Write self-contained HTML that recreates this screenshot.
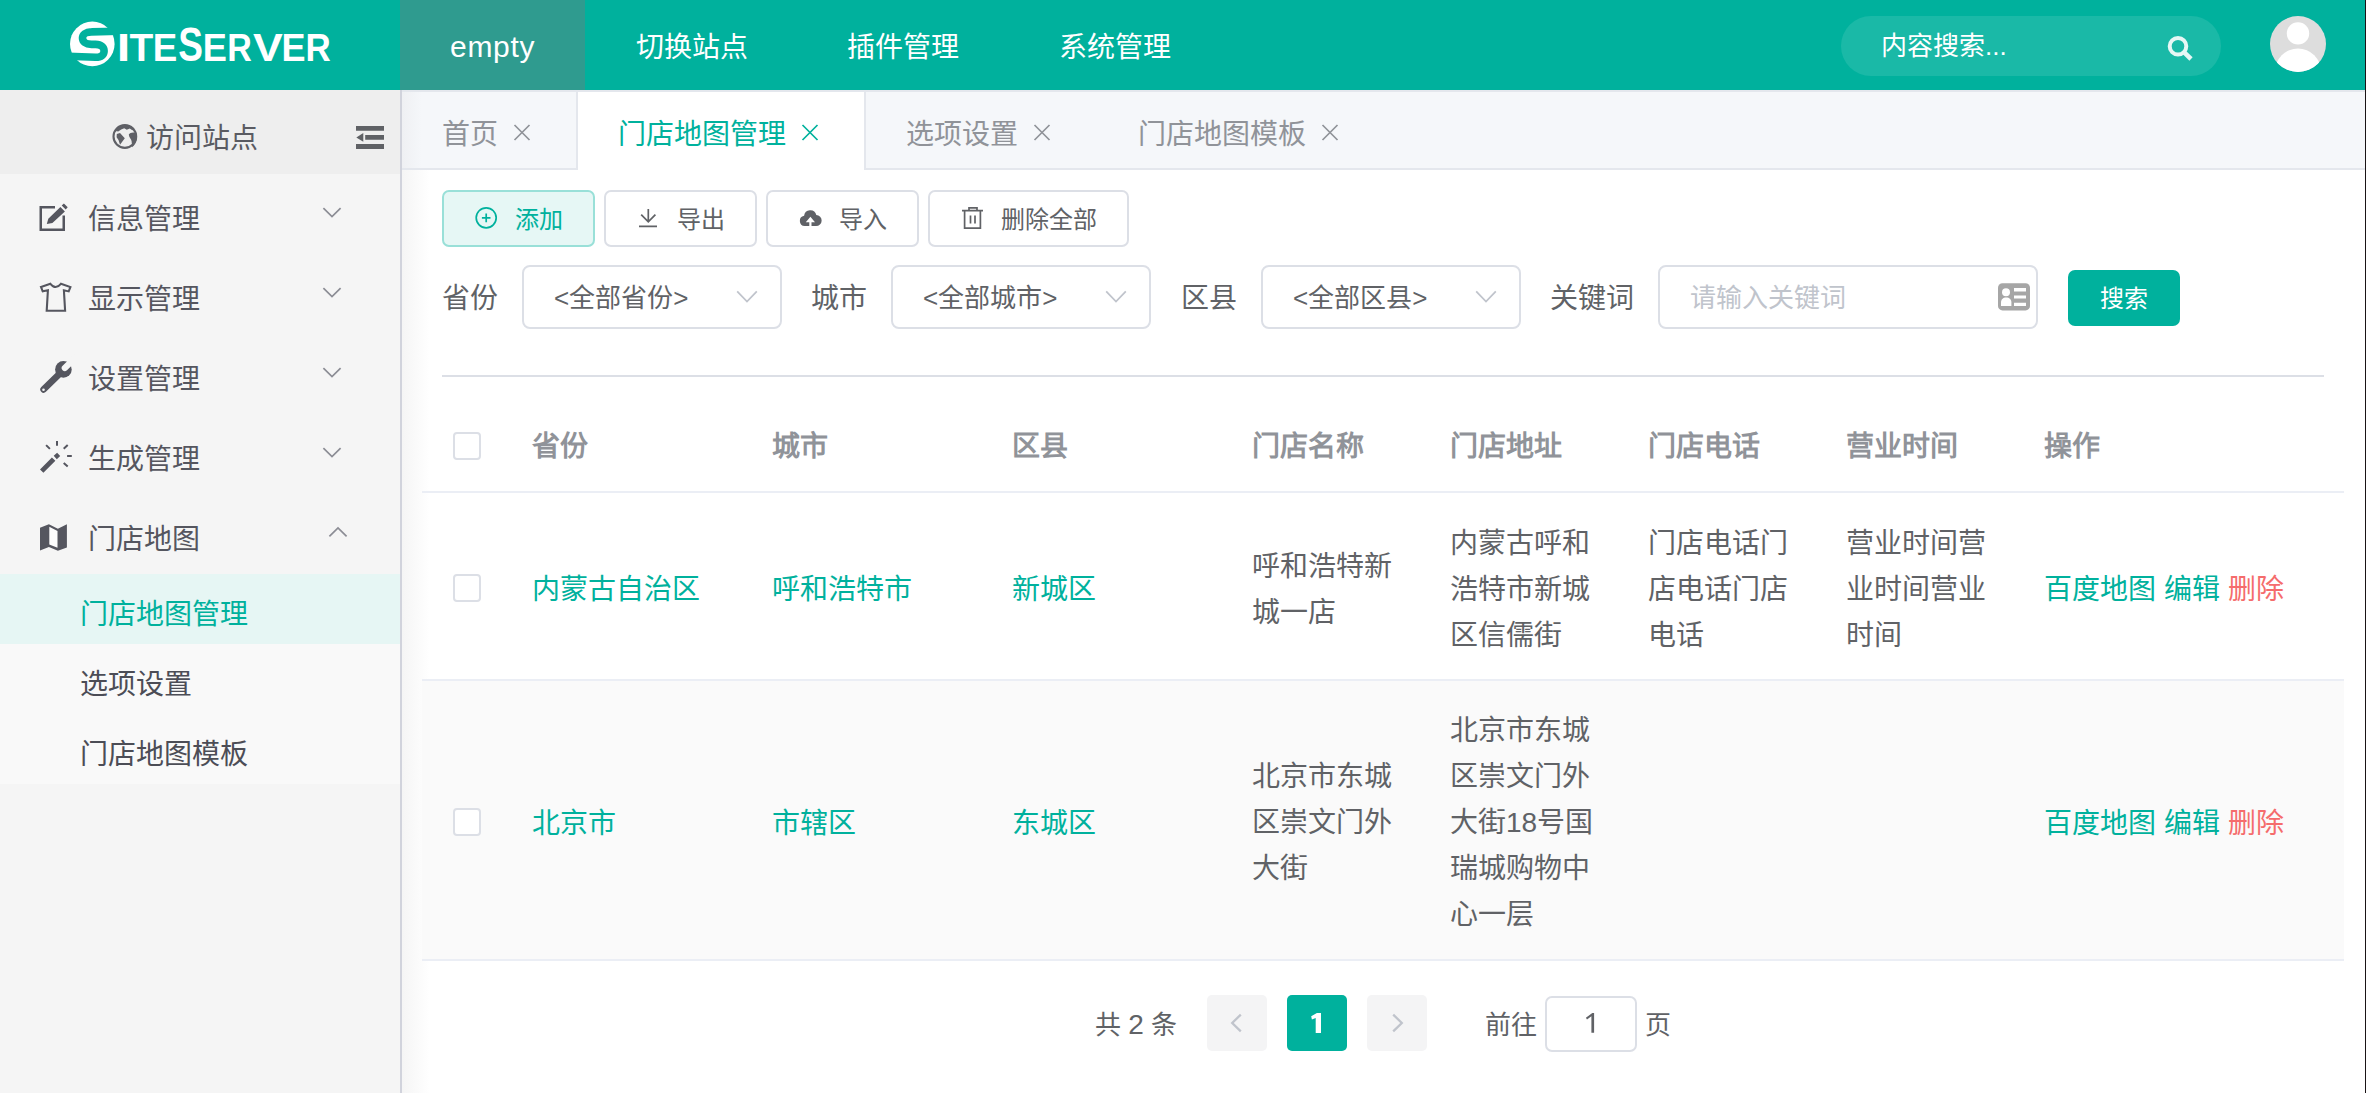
<!DOCTYPE html>
<html lang="zh-CN">
<head>
<meta charset="utf-8">
<title>SiteServer</title>
<style>
*{box-sizing:border-box;margin:0;padding:0}
html,body{width:2366px;height:1093px;overflow:hidden;background:#fff}
body{font-family:"Liberation Sans",sans-serif;color:#606266;position:relative;font-size:28px}
.abs{position:absolute}
svg{position:absolute;overflow:visible}
/* header */
#hdr{position:absolute;left:0;top:0;width:2366px;height:90px;background:#00b19d}
#nav-empty{position:absolute;left:400px;top:0;width:185px;height:90px;background:#2f9b8f}
.nav{position:absolute;top:3px;height:90px;line-height:90px;color:#fff;font-size:28px;white-space:nowrap}
#search{position:absolute;left:1841px;top:16px;width:380px;height:60px;border-radius:30px;background:#1ab9a7}
#search span{position:absolute;left:40px;top:1px;line-height:58px;font-size:26px;color:#fff;white-space:nowrap}
/* sidebar */
#side{position:absolute;left:0;top:90px;width:400px;height:1003px;background:#f5f5f5}
#sideborder{position:absolute;left:400px;top:90px;width:2px;height:1003px;background:#d1d3dc}
#visit{position:absolute;left:0;top:0;width:400px;height:84px;background:#eeeeee}
.mi{position:absolute;left:88px;height:80px;line-height:80px;font-size:28px;color:#55565f;white-space:nowrap}
.subbg{position:absolute;left:0;width:400px;height:70px;background:#f9f9f9}
.sub{position:absolute;left:80px;height:70px;line-height:70px;font-size:28px;color:#4c4d56;white-space:nowrap}
/* tabs */
#tabbar{position:absolute;left:402px;top:90px;width:1964px;height:80px;background:#f5f7fa;border-top:2px solid #e4e7ed;border-bottom:2px solid #e4e7ed}
.tab{position:absolute;top:97px;height:76px;line-height:76px;font-size:28px;color:#909399;white-space:nowrap}
/* content */
.btn{position:absolute;top:190px;height:57px;border:2px solid #dcdfe6;border-radius:7px;background:#fff;font-size:24px;color:#606266;white-space:nowrap}
.btn span{position:absolute;top:1px;left:71px;line-height:53px}
.lbl{position:absolute;top:267px;line-height:64px;font-size:28px;color:#606266;white-space:nowrap}
.sel{position:absolute;top:265px;height:64px;border:2px solid #dcdfe6;border-radius:8px;background:#fff;font-size:26px;color:#606266;white-space:nowrap}
.sel span{position:absolute;left:30px;top:1px;line-height:60px}
#hr{position:absolute;left:442px;top:375px;width:1882px;height:2px;background:#dcdfe6}
/* table */
.th{position:absolute;top:401px;line-height:92px;font-size:28px;font-weight:bold;color:#909399;white-space:nowrap}
.td{position:absolute;font-size:28px;line-height:46px;color:#606266;white-space:nowrap}
.lk{color:#00b19d}
.rd{color:#f56c6c}
.cb{position:absolute;left:453px;width:28px;height:28px;border:2px solid #dcdfe6;border-radius:4px;background:#fff}
.line{position:absolute;left:422px;width:1922px;height:2px;background:#ebeef5}
/* pagination */
.pg{position:absolute;top:997px;height:56px;line-height:56px;font-size:26px;color:#606266;white-space:nowrap}
.pb{position:absolute;top:995px;width:60px;height:56px;border-radius:5px;background:#f4f4f5}
</style>
</head>
<body>
<div id="hdr"></div>
<div id="nav-empty"></div>
<!-- logo -->
<svg style="left:60px;top:10px" width="290" height="70" viewBox="0 0 290 70">
  <circle cx="32.3" cy="33.9" r="22.3" fill="#fff"/>
  <path d="M58 21.300L31.500 21.900C25.500 21.900 22.500 24.600 22.500 28.100C22.500 31.600 25.500 34.400 31.500 34.400L35.500 34.400C41.500 34.400 44.100 37.500 44.100 40.900C44.100 44.500 41.500 47.300 35.500 47.300L8 46.300" fill="none" stroke="#00b19d" stroke-width="7.600" stroke-linejoin="round"/>
  <g fill="#fff" font-family="Liberation Sans, sans-serif" font-weight="bold" font-size="100">
<text transform="matrix(0.4860 0 0 0.3866 56.65 51.00)">I</text>
<text transform="matrix(0.3889 0 0 0.3866 69.56 51.00)">T</text>
<text transform="matrix(0.3672 0 0 0.3866 92.64 51.00)">E</text>
<text transform="matrix(0.3705 0 0 0.4887 118.13 51.22)">S</text>
<text transform="matrix(0.3618 0 0 0.3866 142.78 51.00)">E</text>
<text transform="matrix(0.3403 0 0 0.3866 167.32 51.00)">R</text>
<text transform="matrix(0.4469 0 0 0.3866 193.09 51.00)">V</text>
<text transform="matrix(0.3600 0 0 0.3866 221.49 51.00)">E</text>
<text transform="matrix(0.3497 0 0 0.3866 245.56 51.00)">R</text>
  </g>
</svg>
<div class="nav" style="left:450px;top:2px;font-size:30px;letter-spacing:0.700px">empty</div>
<div class="nav" style="left:636px">切换站点</div>
<div class="nav" style="left:847px">插件管理</div>
<div class="nav" style="left:1059px">系统管理</div>
<div id="search"><span>内容搜索...</span></div>
<svg style="left:0;top:0" width="2366" height="90" viewBox="0 0 2366 90">
  <circle cx="2178" cy="46.200" r="8.300" fill="none" stroke="#e6f7f5" stroke-width="4"/>
  <path d="M2184.500 52.600L2191 59" stroke="#e6f7f5" stroke-width="4.600" fill="none"/>
  <clipPath id="avc"><circle cx="2298" cy="44" r="28"/></clipPath>
  <circle cx="2298" cy="44" r="28" fill="#dddddd"/>
  <g clip-path="url(#avc)"><circle cx="2298" cy="33.400" r="11.200" fill="#fff"/><circle cx="2298" cy="71.400" r="23" fill="#fff"/></g>
</svg>

<!-- sidebar -->
<div id="side"><div id="visit"></div>
  <div class="subbg" style="top:484px;background:#e6f6f4"></div>
  <div class="subbg" style="top:554px"></div>
  <div class="subbg" style="top:624px"></div>
</div>
<div id="sideborder"></div>
<div class="abs" style="left:146px;top:97px;line-height:84px;font-size:28px;color:#5a5b62;white-space:nowrap">访问站点</div>
<div class="mi" style="top:180px">信息管理</div>
<div class="mi" style="top:260px">显示管理</div>
<div class="mi" style="top:340px">设置管理</div>
<div class="mi" style="top:420px">生成管理</div>
<div class="mi" style="top:500px">门店地图</div>
<div class="sub" style="top:580px;color:#00b19d">门店地图管理</div>
<div class="sub" style="top:650px">选项设置</div>
<div class="sub" style="top:720px">门店地图模板</div>
<svg style="left:0;top:0" width="420" height="800" viewBox="0 0 420 800">
  <!-- globe -->
  <circle cx="124.850" cy="136.500" r="11.350" fill="none" stroke="#5f6066" stroke-width="2.100"/>
  <path d="M115.800 131C117.500 127 121.500 124.700 126 124.900C129.500 125 132.500 126.500 134.500 128.800L132.300 130.200L129.800 128.600L126.800 129.800L124.200 128.200L121.200 129.600L118.200 131.400ZM116.800 134L120 133L124.800 138.200L120 144.800L118.500 140L116.600 137.200ZM128.800 134.600C129.800 132.600 133 132 136.400 133L136.800 139C136.400 142 134.800 145.200 132.200 147.300L131.600 141.200C131.600 139.200 128.800 137.600 128.800 134.600Z" fill="#5f6066"/>
  <!-- outdent -->
  <path d="M356 126h28v4.800h-28zM365.200 135H384v4.800h-18.800zM356 144.100h28v4.800h-28zM356.300 137.400L363.300 133v8.800z" fill="#5f6165"/>
  <!-- edit -->
  <path d="M55 207.250H40.750V229.750H63.750V215.500" fill="none" stroke="#55565f" stroke-width="2.500"/>
  <path d="M46.800 224.100L48.300 218.800L60.400 206.900L64.900 211.400L52.400 223ZM61.700 205.600L63.900 203.400L67.700 207.200L65.700 209.600Z" fill="#55565f"/>
  <!-- tshirt -->
  <path d="M41 286.900L50.400 283.800Q55.600 290.300 60.900 283.800L70.400 287.100L68.700 291.400L63.900 290.300L65.100 310.800H46.700L47.900 290.300L42.700 291.400Z" fill="none" stroke="#55565f" stroke-width="2.100" stroke-linejoin="miter"/>
  <!-- wrench -->
  <path d="M43.600 389.400L60.500 372.800" stroke="#55565f" stroke-width="6.600" stroke-linecap="round" fill="none"/>
  <circle cx="63.400" cy="369.400" r="8.300" fill="#55565f"/>
  <path d="M64.800 368L76 357" stroke="#f5f5f5" stroke-width="6.200" stroke-linecap="round" fill="none"/>
  <circle cx="43.500" cy="389.700" r="1.300" fill="#f5f5f5"/>
  <!-- wand -->
  <path d="M40 469.400L43.400 472.800L55.400 460.700L51.900 457.400ZM53.700 455.700L57.100 452.700L60.200 455.900L56.800 459.300Z" fill="#55565f"/>
  <path d="M57 441v4.800M46.100 445.100l3.800 3.800M67.700 445.100l-4 3.700M67.100 455.900h4.700M63.700 462.900l4 3.600" stroke="#55565f" stroke-width="2" fill="none"/>
  <!-- map -->
  <path d="M40 527.700L48.900 524.200L57.900 528.700L66.900 524.200V547.400L57.900 550.800L48.900 547.100L40 550.600Z" fill="#55565f"/>
  <path d="M49.300 526.800L57.500 530.900V547.800L49.300 544.500Z" fill="#fcfcfc"/>
  <!-- chevrons -->
  <g fill="none" stroke="#8c8d95" stroke-width="1.700">
    <path d="M323.400 208.200l8.600 8.400l8.600-8.400"/>
    <path d="M323.400 288.200l8.600 8.400l8.600-8.400"/>
    <path d="M323.400 368.200l8.600 8.400l8.600-8.400"/>
    <path d="M323.400 448.200l8.600 8.400l8.600-8.400"/>
    <path d="M329.400 536.300l8.600-8.400l8.600 8.400"/>
  </g>
</svg>

<!-- tabs -->
<div id="tabbar"></div>
<div class="abs" style="left:402px;top:92px;width:20px;height:76px;background:linear-gradient(to right,#eff0f3,#f5f7fa)"></div>
<div class="abs" style="left:576px;top:92px;width:2px;height:78px;background:#e4e7ed"></div>
<div class="abs" style="left:578px;top:92px;width:286px;height:78px;background:#fff"></div>
<div class="abs" style="left:864px;top:92px;width:2px;height:78px;background:#e4e7ed"></div>
<div class="tab" style="left:442px">首页</div>
<div class="tab" style="left:618px;color:#00b19d">门店地图管理</div>
<div class="tab" style="left:906px">选项设置</div>
<div class="tab" style="left:1138px">门店地图模板</div>
<svg style="left:0;top:0" width="1400" height="180" viewBox="0 0 1400 180">
  <g fill="none" stroke-width="1.700">
  <path d="M514.500 125l15 15M529.500 125l-15 15" stroke="#909399"/>
  <path d="M802.500 125l15 15M817.500 125l-15 15" stroke="#00b19d"/>
  <path d="M1034.500 125l15 15M1049.500 125l-15 15" stroke="#909399"/>
  <path d="M1322.500 125l15 15M1337.500 125l-15 15" stroke="#909399"/>
  </g>
</svg>
<div class="abs" style="left:402px;top:170px;width:28px;height:923px;background:linear-gradient(to right,#f5f5f5,#fff)"></div>

<!-- toolbar -->
<div class="btn" style="left:442px;width:153px;background:#e6f7f5;border-color:#99e0d8;color:#00b19d"><span>添加</span></div>
<div class="btn" style="left:604px;width:153px"><span>导出</span></div>
<div class="btn" style="left:766px;width:153px"><span>导入</span></div>
<div class="btn" style="left:928px;width:201px"><span>删除全部</span></div>
<svg style="left:0;top:0" width="1200" height="260" viewBox="0 0 1200 260">
  <circle cx="486.200" cy="217.800" r="10" fill="none" stroke="#00b19d" stroke-width="1.700"/>
  <path d="M481.900 217.800h8.600M486.200 213.400v8.800" stroke="#00b19d" stroke-width="1.700" fill="none"/>
  <path d="M648.300 209v13M641.200 214.600l7.100 7.300l7.100-7.300M639 226.400h18" stroke="#606266" stroke-width="1.700" fill="none"/>
  <path d="M804.700 226.100a5.200 5.200 0 0 1 -.6 -10.300a6.200 6.200 0 0 1 12.200 -.7a5.400 5.400 0 0 1 -.3 11z" fill="#5f6166"/>
  <path d="M810.400 216.700l4.600 5.600h-3.500v3.900h-2.200v-3.900h-3.500z" fill="#fff"/>
  <path d="M962 210.700h21M969 210.700v-2.800h8v2.800M964.600 210.700v17.400h15.800v-17.400M970.500 215.500v8M975 215.500v8" stroke="#606266" stroke-width="1.700" fill="none"/>
</svg>

<!-- filters -->
<div class="lbl" style="left:442px">省份</div>
<div class="sel" style="left:522px;width:260px"><span>&lt;全部省份&gt;</span></div>
<div class="lbl" style="left:811px">城市</div>
<div class="sel" style="left:891px;width:260px"><span>&lt;全部城市&gt;</span></div>
<div class="lbl" style="left:1181px">区县</div>
<div class="sel" style="left:1261px;width:260px"><span>&lt;全部区县&gt;</span></div>
<div class="lbl" style="left:1550px">关键词</div>
<div class="sel" style="left:1658px;width:380px"><span style="color:#c0c4cc">请输入关键词</span></div>
<div class="abs" style="left:2068px;top:270px;width:112px;height:56px;border-radius:7px;background:#00b19d;color:#fff;font-size:24px;line-height:57px;text-align:center">搜索</div>
<svg style="left:0;top:0" width="2100" height="340" viewBox="0 0 2100 340">
  <g fill="none" stroke="#c0c4cc" stroke-width="1.800">
  <path d="M737.200 291.300l9.800 10.200l9.800-10.200"/>
  <path d="M1106.200 291.300l9.800 10.200l9.800-10.200"/>
  <path d="M1476.200 291.300l9.800 10.200l9.800-10.200"/>
  </g>
  <rect x="1998" y="283.200" width="32" height="27.200" rx="4.500" fill="#a6a6a6"/>
  <circle cx="2006" cy="292.200" r="4" fill="#fff"/>
  <path d="M2001 306v-3.500c0-3 2-5 5.200-5s5.200 2 5.200 5v3.500z" fill="#fff"/>
  <path d="M2014 288h12v3.400h-12zM2014 295.400h12v3.200h-12zM2014 302.800h12v3.200h-12z" fill="#fff"/>
</svg>
<div id="hr"></div>

<!-- table -->
<div class="abs" style="left:422px;top:681px;width:1922px;height:278px;background:#fafafa"></div>
<div class="line" style="top:491px"></div>
<div class="line" style="top:679px"></div>
<div class="line" style="top:959px"></div>
<div class="cb" style="top:432px"></div>
<div class="cb" style="top:574px"></div>
<div class="cb" style="top:808px"></div>
<div class="th" style="left:532px">省份</div>
<div class="th" style="left:772px">城市</div>
<div class="th" style="left:1012px">区县</div>
<div class="th" style="left:1252px">门店名称</div>
<div class="th" style="left:1450px">门店地址</div>
<div class="th" style="left:1648px">门店电话</div>
<div class="th" style="left:1846px">营业时间</div>
<div class="th" style="left:2044px">操作</div>

<div class="td lk" style="left:532px;top:567px">内蒙古自治区</div>
<div class="td lk" style="left:772px;top:567px">呼和浩特市</div>
<div class="td lk" style="left:1012px;top:567px">新城区</div>
<div class="td" style="left:1252px;top:544px">呼和浩特新<br>城一店</div>
<div class="td" style="left:1450px;top:521px">内蒙古呼和<br>浩特市新城<br>区信儒街</div>
<div class="td" style="left:1648px;top:521px">门店电话门<br>店电话门店<br>电话</div>
<div class="td" style="left:1846px;top:521px">营业时间营<br>业时间营业<br>时间</div>
<div class="td lk" style="left:2044px;top:567px">百度地图 编辑 <span class="rd">删除</span></div>

<div class="td lk" style="left:532px;top:801px">北京市</div>
<div class="td lk" style="left:772px;top:801px">市辖区</div>
<div class="td lk" style="left:1012px;top:801px">东城区</div>
<div class="td" style="left:1252px;top:754px">北京市东城<br>区崇文门外<br>大街</div>
<div class="td" style="left:1450px;top:708px">北京市东城<br>区崇文门外<br>大街18号国<br>瑞城购物中<br>心一层</div>
<div class="td lk" style="left:2044px;top:801px">百度地图 编辑 <span class="rd">删除</span></div>

<!-- pagination -->
<div class="pg" style="left:1095px">共 <span style="font-size:28px">2</span> 条</div>
<div class="pb" style="left:1207px"></div>
<div class="pb" style="left:1287px;background:#00b19d"></div>
<div class="pb" style="left:1367px"></div>
<div class="pg" style="left:1485px">前往</div>
<div class="abs" style="left:1545px;top:996px;width:92px;height:56px;border:2px solid #dcdfe6;border-radius:7px;background:#fff"></div>
<div class="pg" style="left:1645px">页</div>
<svg style="left:0;top:0" width="1700" height="1093" viewBox="0 0 1700 1093">
  <path d="M1316.900 1013H1321V1033H1315.700V1017.900L1311.900 1019.600L1311.200 1016.200Z" fill="#fff"/>
  <path d="M1592.300 1013H1594.100V1032.800H1591.400V1016.300L1587 1019.500L1585.900 1017.700Z" fill="#606266"/>
  <path d="M1240.800 1014.600l-8.600 8.400l8.600 8.400" fill="none" stroke="#c0c4cc" stroke-width="2.300"/>
  <path d="M1393.200 1014.600l8.600 8.400l-8.600 8.400" fill="none" stroke="#c0c4cc" stroke-width="2.300"/>
</svg>

<!-- right edge -->
<div class="abs" style="left:2365px;top:0;width:1px;height:1093px;background:#1a1416"></div>
</body>
</html>
